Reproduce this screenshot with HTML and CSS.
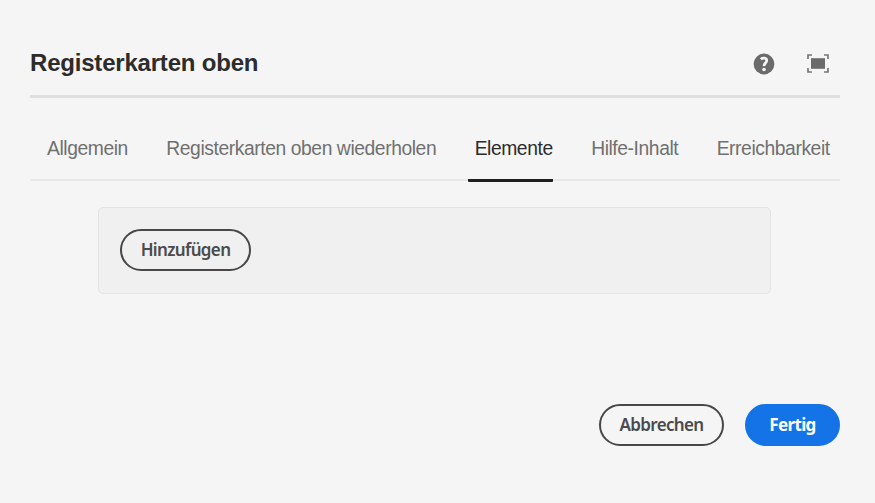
FILE: index.html
```
<!DOCTYPE html>
<html lang="de">
<head>
<meta charset="utf-8">
<title>Registerkarten oben</title>
<link rel="stylesheet" href="styles.css">
</head>
<body>
<main class="dialog">
  <header class="header">
    <h1 class="title">Registerkarten oben</h1>
    <div class="tools">
      <button class="tool help" aria-label="Hilfe">
        <svg width="22" height="22" viewBox="0 0 22 22"><circle cx="11" cy="11" r="10.4" fill="#6b6b6b"/><path d="M7.8 6.2C9.7 4.5 13.7 4.6 13.7 7.6C13.7 10.1 10.9 10.1 11.1 13.1" fill="none" stroke="#f5f5f5" stroke-width="2.8"/><circle cx="11" cy="16.5" r="1.8" fill="#f5f5f5"/></svg>
      </button>
      <button class="tool full" aria-label="Vollbild">
        <svg width="22" height="19" viewBox="0 0 22 19"><path d="M5 1H1V5M17 1H21V5M1 14V18H5M21 14V18H17" fill="none" stroke="#777" stroke-width="1.7"/><rect x="4" y="4.2" width="14" height="10.6" fill="#6b6b6b"/></svg>
      </button>
    </div>
  </header>
  <nav class="tabs">
    <a class="tab">Allgemein</a>
    <a class="tab">Registerkarten oben wiederholen</a>
    <a class="tab active">Elemente</a>
    <a class="tab">Hilfe-Inhalt</a>
    <a class="tab">Erreichbarkeit</a>
  </nav>
  <section class="panel">
    <button class="button add">Hinzufügen</button>
  </section>
  <footer class="footer">
    <button class="button cancel">Abbrechen</button>
    <button class="button primary">Fertig</button>
  </footer>
</main>
</body>
</html>
```
FILE: styles.css
```
* { box-sizing: border-box; }
body {
  margin: 0;
  background: #f5f5f5;
  font-family: "Liberation Sans", Arial, sans-serif;
}
.dialog {
  width: 875px;
  height: 503px;
  padding: 30px 35px 57px 30px;
  display: flex;
  flex-direction: column;
}
.header {
  height: 68px;
  display: flex;
  align-items: center;
  justify-content: space-between;
  border-bottom: 3px solid #dfdfdf;
}
.title {
  margin: 0;
  font-size: 24px;
  line-height: 28px;
  letter-spacing: -0.2px;
  color: #2c2c2c;
}
.tools {
  display: flex;
  align-items: center;
  gap: 32px;
  padding: 2px 11px 0 0;
}
.tool {
  padding: 0;
  border: 0;
  background: none;
  display: flex;
}
.tabs {
  height: 83px;
  padding: 0 10px 0 17px;
  display: flex;
  gap: 38.4px;
  border-bottom: 2px solid #e7e7e7;
}
.tab {
  height: 84px;
  padding-top: 40px;
  font-size: 19.3px;
  line-height: 22px;
  letter-spacing: -0.42px;
  white-space: nowrap;
  color: #707070;
}
.active {
  margin-left: -7px;
  padding-left: 7px;
  color: #2c2c2c;
  border-bottom: 3px solid #1f1f1f;
  border-radius: 1px;
}
.panel {
  width: 673px;
  height: 87px;
  margin: 26px 0 0 68px;
  padding: 21px;
  background: #f0f0f0;
  border: 1px solid #e4e4e4;
  border-radius: 5px;
}
.button {
  height: 42px;
  padding: 0 0 1px;
  border: 2px solid #484848;
  border-radius: 21px;
  background: transparent;
  color: #4b4b4b;
  font: 600 17px/24px "Noto Sans", sans-serif;
  letter-spacing: -0.65px;
}
.add { width: 131px; }
.footer {
  margin-top: auto;
  display: flex;
  justify-content: flex-end;
  gap: 21px;
}
.cancel { width: 125px; }
.primary {
  width: 95px;
  background: #1473e6;
  border-color: #1473e6;
  color: #fff;
  font-weight: 700;
}
```
